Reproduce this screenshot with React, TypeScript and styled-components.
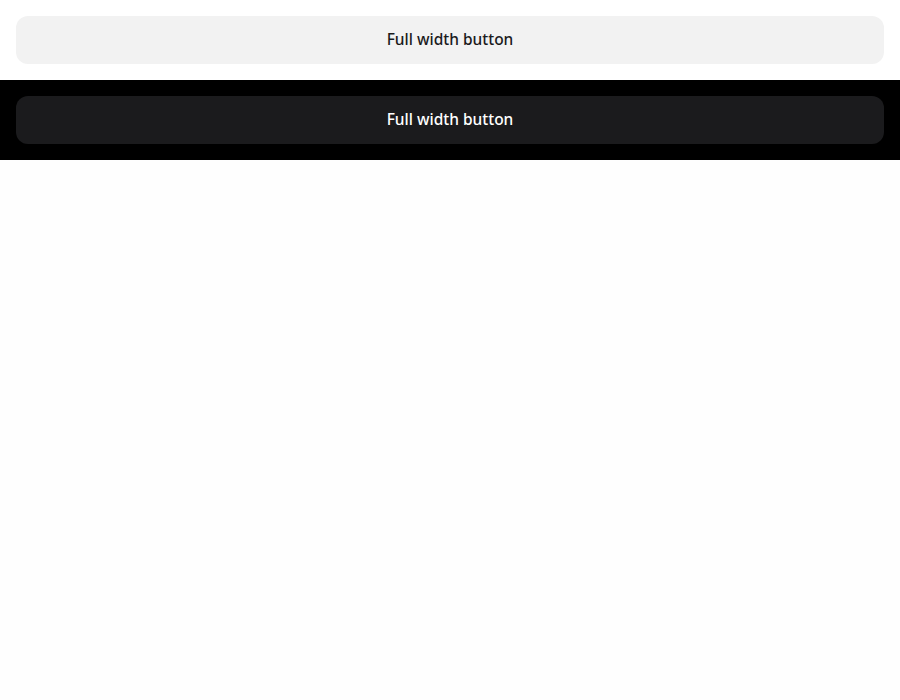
import styled, { createGlobalStyle } from "styled-components";

const GlobalStyle = createGlobalStyle`
  html, body {
    margin: 0;
    padding: 0;
    background: #fefefe;
    font-family: "Noto Sans", sans-serif;
  }
`;

type Mode = "light" | "dark";

const Section = styled.div<{ mode: Mode }>`
  padding: 16px;
  background: ${({ mode }) => (mode === "dark" ? "#000" : "#fff")};
`;

const Button = styled.button<{ mode: Mode }>`
  display: flex;
  width: 100%;
  height: 48px;
  padding: 0 16px 2px;
  align-items: center;
  justify-content: center;
  border: none;
  border-radius: 12px;
  font-family: inherit;
  font-size: 15.5px;
  font-weight: 500;
  cursor: pointer;
  background: ${({ mode }) => (mode === "dark" ? "#1b1b1d" : "#f2f2f2")};
  color: ${({ mode }) => (mode === "dark" ? "#fff" : "#1b1b1d")};
`;

const App = () => (
  <>
    <GlobalStyle />
    <Section mode="light">
      <Button mode="light">Full width button</Button>
    </Section>
    <Section mode="dark">
      <Button mode="dark">Full width button</Button>
    </Section>
  </>
);

export default App;
